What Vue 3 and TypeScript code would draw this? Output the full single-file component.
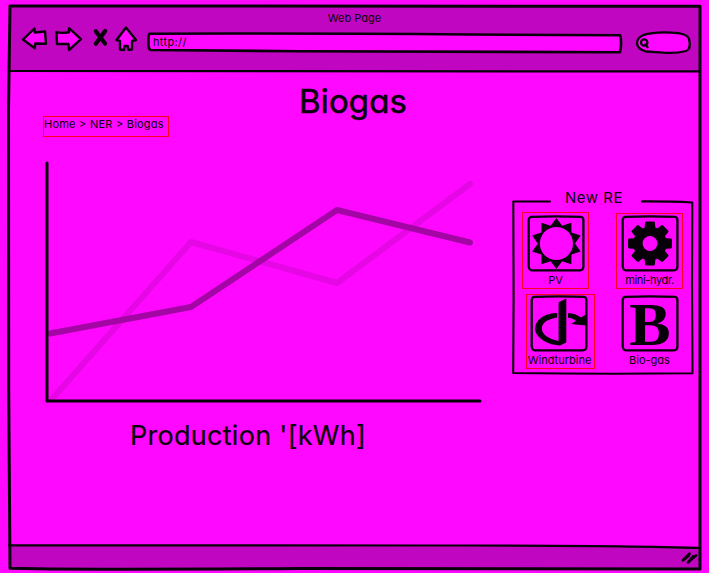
<script setup lang="ts">
interface Series {
  name: string
  points: string
  color: string
}

interface Tile {
  label: string
  icon: 'sun' | 'gear' | 'turbine' | 'letter'
  linked: boolean
}

const series: Series[] = [
  { name: 'previous', points: '8,238 147,81 293,122 426,23', color: '#e508e5' },
  { name: 'current', points: '6,172.5 147,146 293,49 426,81.5', color: '#a406a6' },
]

const tiles: Tile[] = [
  { label: 'PV', icon: 'sun', linked: true },
  { label: 'mini-hydr.', icon: 'gear', linked: true },
  { label: 'Windturbine', icon: 'turbine', linked: true },
  { label: 'Bio-gas', icon: 'letter', linked: false },
]

const gearTeeth = [0, 45, 90, 135, 180, 225, 270, 315]

function star(rays: number, outer: number, inner: number): string {
  const points: string[] = []
  for (let i = 0; i < rays * 2; i++) {
    const radius = i % 2 === 0 ? outer : inner
    const angle = (Math.PI * i) / rays - Math.PI / 2
    points.push(`${(radius * Math.cos(angle)).toFixed(2)},${(radius * Math.sin(angle)).toFixed(2)}`)
  }
  return points.join(' ')
}

const sunPoints = star(10, 25.5, 18.6)
</script>

<template>
  <div class="browser">
    <header class="chrome">
      <div class="window-title">Web Page</div>
      <div class="toolbar">
        <svg class="nav" width="116" height="28" viewBox="22 25 116 28">
          <g class="nav-arrow">
            <path d="M23 39.5 L34.5 28.5 L34.8 32.5 L45 31.5 L46 43.7 L35.2 43.5 L34.8 48.3 Z" />
            <path d="M56.5 32.2 Q61 33.5 69 32.3 L69 28.2 L81 39.2 L69 50 L68.5 44 L57 44 Z" />
            <path d="M126 27.5 L136 40 L132 41 L132 49.5 L128.5 49.8 L127.7 46 L124.5 46 L124 50 L120 49.5 L120 41 L116.5 40 Z" />
          </g>
          <path class="nav-stop" d="M95.8 31.2 L105 43.5 M105.2 31 L95.8 43.7" />
        </svg>
        <div class="address">
          <svg class="outline" width="476" height="22" viewBox="147 32 476 22">
            <path d="M149.5 33.7 Q300 33.2 470 34.5 L620.2 35.2 Q622 43 620 52.2 Q400 51.4 300 51.3 L150.5 50 Q148 48.5 148.5 43 Q148.3 35 149.5 33.7 Z" />
          </svg>
          <span class="url">http://</span>
        </div>
        <svg class="search" width="57" height="26" viewBox="635 30 57 26">
          <path class="pill" d="M643 35.2 Q654 31.8 671 32.6 Q687 33 689 39 Q691.5 49 686 51 Q674 54 660 52.3 L646 51.5 Q637 49 637 43 Q637 38 643 35.2 Z" />
          <circle cx="644.2" cy="42.5" r="3.2" />
          <path d="M645.5 44.5 L647.6 47.2" />
        </svg>
      </div>
    </header>

    <main class="content">
      <section class="report">
        <h1>Biogas</h1>
        <nav class="crumbs">Home &gt; NER &gt; Biogas</nav>
        <svg class="chart" width="440" height="244" viewBox="0 0 440 244">
          <polyline
            v-for="line in series"
            :key="line.name"
            :points="line.points"
            :stroke="line.color"
          />
          <path class="axes" d="M3 2 V240 H436" />
        </svg>
        <h2>Production '[kWh]</h2>
      </section>

      <aside class="panel">
        <svg class="panel-frame" width="184" height="180" viewBox="0 0 184 180">
          <path d="M38 6.5 L1.3 6.5 L1.6 100 L1.2 178 Q90 179.3 180.5 178.3 L180 90 L180.3 7.5 Q160 6.3 130 6.4" />
        </svg>
        <div class="panel-title">New RE</div>
        <div class="tiles">
          <div v-for="tile in tiles" :key="tile.label" :class="['tile', tile.icon, { linked: tile.linked }]">
            <svg class="icon" width="58" height="57" viewBox="0 0 58 57">
              <path class="icon-box" d="M4.5 1.8 Q29 1 54 1.8 Q56.3 2 56.4 5 L56.4 52 Q56.2 55.2 53 55.3 L5 55.3 Q1.8 55 1.7 51 L1.7 5 Q2 2 4.5 1.8 Z" />
              <g v-if="tile.icon === 'sun'" transform="translate(29.4 28.5)">
                <polygon :points="sunPoints" />
                <circle class="hole" r="16.6" />
              </g>
              <g v-else-if="tile.icon === 'gear'" transform="translate(29 28.5)">
                <circle r="16.8" />
                <path
                  v-for="angle in gearTeeth"
                  :key="angle"
                  d="M-5.6 -13 L-4.9 -21 Q-4.6 -22 -3.6 -22 H3.6 Q4.6 -22 4.9 -21 L5.6 -13 Z"
                  :transform="`rotate(${angle})`"
                />
                <circle class="hole" r="7.4" />
              </g>
              <g v-else-if="tile.icon === 'turbine'">
                <path d="M28.6 7.3 L36.3 3.4 L36.3 47.5 L30 50.5 Q21 50 14 46 Q5 40.5 5 33.5 Q5.5 24 16 20 Q21 18.2 27.2 18 L27.2 22.5 Q12 25 11.8 33.5 Q12.5 42.5 28.6 46 Z" />
                <path d="M38 18.2 Q45 18 51 22.5 L56 19.5 V30.5 L41 29 L46 26 Q43 23 38 22.8 Z" />
              </g>
              <text v-else x="29" y="49.5">B</text>
            </svg>
            <span class="label">{{ tile.label }}</span>
          </div>
        </div>
      </aside>
    </main>

    <footer class="status">
      <svg width="18" height="14" viewBox="0 0 18 14">
        <path d="M2 9.2 L8.5 2.8 M7 11.3 L15 4.5 M2.8 8.6 L7.6 4.6 M7.6 11 L12 5.6" />
      </svg>
    </footer>

    <svg class="frame" width="709" height="573" viewBox="0 0 709 573">
      <path d="M10 6 Q300 6 700 6.3 L700 569 L300 568.5 Q150 569.5 50 569 L10 568.3 L8.7 390 L8.5 110 Z" />
      <path class="rule" d="M9 71 Q300 71.8 699 71.4 M9 545.3 L440 545.5 Q620 545.3 699 548" />
    </svg>
  </div>
</template>

<style>
body {
  background: #ff08ff;
}
</style>

<style scoped>
.browser {
  position: relative;
  box-sizing: border-box;
  width: 709px;
  height: 573px;
  padding: 6px 9px 4px;
  display: flex;
  flex-direction: column;
  overflow: hidden;
  color: #0b000b;
  background: #ff08ff;
  font-family: Inter, "Liberation Sans", sans-serif;
  font-feature-settings: "cv11" 1, "calt" 0;
}

svg {
  display: block;
  flex: none;
  overflow: visible;
  fill: none;
  stroke: #080008;
  stroke-linecap: round;
  stroke-linejoin: round;
}

.frame {
  position: absolute;
  inset: 0;
  stroke-width: 3;
  pointer-events: none;
}

.rule {
  stroke-width: 2.2;
}

.chrome {
  height: 65px;
  flex: none;
  background: #c106c1;
}

.window-title {
  padding-top: 4px;
  height: 15px;
  line-height: 16px;
  text-align: center;
  font-size: 11px;
}

.toolbar {
  display: flex;
  padding-left: 13px;
}

.nav {
  stroke-width: 2.4;
}

.nav-arrow {
  fill: #ff08ff;
}

.nav-stop {
  stroke-width: 4.2;
}

.address {
  position: relative;
  width: 476px;
  height: 22px;
  margin: 7px 0 0 9px;
}

.outline {
  position: absolute;
  inset: 0;
  fill: #ff08ff;
  stroke-width: 2.6;
}

.url {
  position: relative;
  display: block;
  padding-left: 6px;
  line-height: 20px;
  font-size: 11px;
  letter-spacing: 0.35px;
}

.search {
  margin: 5px 0 0 12px;
  stroke-width: 2.3;
}

.pill {
  fill: #ff08ff;
}

.content {
  flex: 1;
  display: flex;
}

.report {
  width: 503px;
}

h1,
h2 {
  margin: 0;
  font-weight: 400;
}

h1 {
  margin: 10px 0 0 290px;
  height: 35px;
  line-height: 41px;
  font-size: 33px;
  letter-spacing: 0.15px;
  -webkit-text-stroke: 0.6px;
}

.crumbs {
  box-sizing: border-box;
  width: 126px;
  height: 21px;
  margin-left: 34px;
  border: 1px solid #ff0020;
  line-height: 14px;
  font-size: 11px;
  letter-spacing: 0.23px;
  white-space: nowrap;
}

.chart {
  margin: 24px 0 0 35px;
  stroke-width: 6;
}

.axes {
  stroke-width: 3;
}

h2 {
  margin: 13px 0 0 121px;
  line-height: 36px;
  font-size: 27px;
  letter-spacing: 0.28px;
  white-space: nowrap;
  -webkit-text-stroke: 0.2px;
}

.panel {
  position: relative;
  width: 184px;
  height: 180px;
  margin-top: 124px;
}

.panel-frame {
  position: absolute;
  inset: 0;
  stroke-width: 2.1;
}

.panel-title {
  height: 17px;
  margin-top: -7px;
  line-height: 19px;
  text-align: center;
  font-size: 15px;
  letter-spacing: 0.5px;
  text-indent: -20px;
}

.tiles {
  display: grid;
  grid-template-columns: 67px 67px;
  grid-template-rows: 77px 75px;
  column-gap: 27px;
  row-gap: 5px;
  padding-left: 10px;
  margin-top: 7px;
}

.tile {
  box-sizing: border-box;
  width: 67px;
  height: 77px;
  display: flex;
  flex-direction: column;
  align-items: center;
  border: 1px solid transparent;
  padding-top: 2px;
}

.tile.linked {
  border-color: #ff0020;
}

.tile.gear {
  height: 76px;
  margin-top: 1px;
  padding-top: 1px;
}

.tile.gear .label {
  letter-spacing: -0.35px;
}

.tile.turbine {
  width: 69px;
  height: 75px;
  margin-left: 4px;
  padding: 0 2px 0 0;
}

.tile.turbine .icon {
  margin-right: 1px;
}

.tile.letter {
  padding-top: 0;
}

.icon {
  stroke-width: 2.3;
}

.icon g {
  fill: #080008;
  stroke: none;
}

.icon .hole {
  fill: #ff08ff;
}

.icon text {
  fill: #080008;
  stroke: none;
  text-anchor: middle;
  font-family: "Liberation Serif", serif;
  font-size: 62px;
  font-weight: 700;
}

.label {
  line-height: 14px;
  margin-top: 1px;
  font-size: 11px;
  white-space: nowrap;
}

.status {
  height: 23px;
  flex: none;
  display: flex;
  justify-content: flex-end;
  align-items: center;
  padding-right: 1px;
  background: #c106c1;
}

.status svg {
  stroke-width: 2.8;
}
</style>
